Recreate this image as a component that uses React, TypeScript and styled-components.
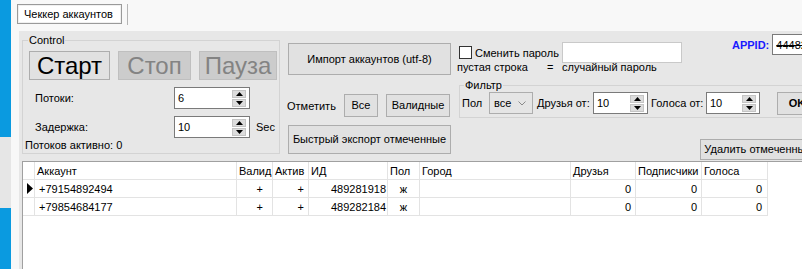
import React from "react";
import styled, { createGlobalStyle } from "styled-components";

const Global = createGlobalStyle`
  html, body { margin: 0; padding: 0; background: #f8f8f8; }
  body {
    font-family: "Liberation Sans", Arial, sans-serif;
    font-size: 11px;
    color: #000;
  }
  #root { width: 802px; height: 269px; overflow: hidden; }
  * { box-sizing: border-box; }
`;

const Screen = styled.div`
  display: flex;
  width: 802px;
  height: 269px;
  overflow: hidden;
`;

const DesktopStrip = styled.div`
  width: 11px;
  flex: none;
  display: flex;
  flex-direction: column;
`;

const StripPart = styled.div<{ $h?: number; $tone: "blue" | "gray" }>`
  flex: ${(p) => (p.$h ? `0 0 ${p.$h}px` : "1 1 auto")};
  background: ${(p) => (p.$tone === "blue" ? "#0a9ae0" : "#e6e6e6")};
`;

const Window = styled.div`
  flex: 1;
  min-width: 0;
  display: flex;
  flex-direction: column;
  background: #f8f8f8;
`;

const TabStrip = styled.div`
  height: 31px;
  flex: none;
  display: flex;
  align-items: flex-start;
  padding: 4px 0 0 6px;
`;

const Tab = styled.div`
  width: 105px;
  height: 20px;
  border: 1px solid #9a9a9a;
  box-shadow: inset 0 0 0 1px #f0f0f0;
  background: #fff;
  display: flex;
  align-items: center;
  padding-left: 6px;
  white-space: nowrap;
`;

const TabDivider = styled.div`
  width: 1px;
  height: 21px;
  margin-left: 5px;
  background: #b4b4b4;
`;

const TabPage = styled.div`
  flex: 1;
  margin-left: 8px;
  background: #e7e7e7;
  padding-left: 3px;
  display: flex;
  flex-direction: column;
  min-height: 0;
`;

const TopArea = styled.div`
  height: 130px;
  flex: none;
  display: flex;
  align-items: flex-start;
`;

const GroupBox = styled.fieldset<{ $w: number; $h: number; $mt?: number }>`
  flex: none;
  width: ${(p) => p.$w}px;
  height: ${(p) => p.$h}px;
  margin: ${(p) => p.$mt ?? 0}px 0 0 0;
  padding: 0;
  border: 1px solid #d3d3d3;
  min-width: 0;
  display: flex;
  flex-direction: column;
`;

const GroupLegend = styled.legend<{ $ml: number }>`
  margin-left: ${(p) => p.$ml}px;
  padding: 0 1px;
  font-size: 11px;
  line-height: 13px;
`;

const Btn = styled.button<{ $w: number; $h: number; $bold?: boolean; $size?: number; $mt?: number; $ml?: number }>`
  flex: none;
  width: ${(p) => p.$w}px;
  height: ${(p) => p.$h}px;
  margin: ${(p) => p.$mt ?? 0}px 0 0 ${(p) => p.$ml ?? 0}px;
  border: 1px solid #adadad;
  background: #e1e1e1;
  color: #000;
  font-family: "Liberation Sans", Arial, sans-serif;
  font-size: ${(p) => p.$size ?? 11}px;
  font-weight: ${(p) => (p.$bold ? 700 : 400)};
  line-height: 1;
  padding: 0;
  display: flex;
  align-items: center;
  justify-content: center;
  white-space: nowrap;
  overflow: hidden;
  &:disabled {
    background: #cccccc;
    border-color: #bfbfbf;
    color: #838383;
  }
`;

const ButtonRow = styled.div`
  display: flex;
  gap: 8px;
  margin: 4px 0 0 6px;
`;

const SettingRow = styled.div<{ $mt: number }>`
  display: flex;
  align-items: center;
  height: 22px;
  margin-top: ${(p) => p.$mt}px;
  padding-left: 12px;
`;

const SettingLabel = styled.span<{ $w: number }>`
  flex: none;
  width: ${(p) => p.$w}px;
  white-space: nowrap;
`;

const Unit = styled.span`
  margin-left: 6px;
`;

const Status = styled.div`
  margin-top: 1px;
  padding-left: 2px;
  line-height: 13px;
  white-space: nowrap;
`;

const NumBox = styled.div<{ $w: number; $h: number }>`
  flex: none;
  width: ${(p) => p.$w}px;
  height: ${(p) => p.$h}px;
  border: 1px solid #7a7a7a;
  background: #fff;
  display: flex;
  align-items: center;
  padding: 0 3px 0 3px;
`;

const NumValue = styled.span`
  flex: 1;
`;

const Spinner = styled.div`
  flex: none;
  width: 14px;
  display: flex;
  flex-direction: column;
  gap: 1px;
`;

const SpinPart = styled.div`
  height: 8px;
  background: #dcdcdc;
  border: 1px solid #c4c4c4;
  display: flex;
  align-items: center;
  justify-content: center;
`;

const MiddleColumn = styled.div`
  flex: none;
  width: 163px;
  margin-left: 8px;
  display: flex;
  flex-direction: column;
`;

const MarkRow = styled.div`
  display: flex;
  align-items: center;
  height: 23px;
  margin-top: 19px;
  gap: 8px;
`;

const MarkLabel = styled.span`
  width: 49px;
  margin-left: -1px;
  white-space: nowrap;
`;

const RightColumn = styled.div`
  flex: 1;
  min-width: 0;
  margin-left: 4px;
  display: flex;
  flex-direction: column;
`;

const FlexLine = styled.div<{ $mt?: number; $pl?: number }>`
  display: flex;
  align-items: flex-start;
  margin-top: ${(p) => p.$mt ?? 0}px;
  padding-left: ${(p) => p.$pl ?? 0}px;
  white-space: nowrap;
`;

const InlineGroup = styled.div<{ $mt?: number; $ml?: number; $h: number }>`
  flex: none;
  display: flex;
  align-items: center;
  height: ${(p) => p.$h}px;
  margin-top: ${(p) => p.$mt ?? 0}px;
  margin-left: ${(p) => p.$ml ?? 0}px;
`;

const CheckBox = styled.span`
  flex: none;
  width: 13px;
  height: 13px;
  border: 1px solid #333;
  background: #fff;
  margin-left: 4px;
`;

const TextLabel = styled.span<{ $w?: number; $ml?: number }>`
  flex: none;
  ${(p) => (p.$w ? `width: ${p.$w}px;` : "")}
  margin-left: ${(p) => p.$ml ?? 0}px;
  white-space: nowrap;
`;

const TextInput = styled.div<{ $w: number; $h: number; $dark?: boolean; $strike?: boolean }>`
  flex: none;
  width: ${(p) => p.$w}px;
  height: ${(p) => p.$h}px;
  border: 1px solid ${(p) => (p.$dark ? "#7a7a7a" : "#c9c9c9")};
  background: #fff;
  padding-left: 3px;
  display: flex;
  align-items: center;
  text-decoration: ${(p) => (p.$strike ? "line-through" : "none")};
  font-size: 11px;
`;

const HintLine = styled.div`
  display: flex;
  height: 12px;
  line-height: 12px;
  margin-top: -2px;
  white-space: nowrap;
`;

const AppIdLabel = styled.span`
  color: #1a1aff;
  font-weight: 700;
  font-size: 11px;
  margin-right: 3px;
`;

const FilterBox = styled(GroupBox)`
  margin: 6px 0 0 4px;
  flex-direction: row;
  align-items: flex-start;
`;

const FilterContent = styled.div`
  display: flex;
  align-items: center;
  height: 22px;
  white-space: nowrap;
`;

const Combo = styled.div`
  flex: none;
  width: 44px;
  height: 22px;
  border: 1px solid #adadad;
  background: #e5e5e5;
  display: flex;
  align-items: center;
  justify-content: space-between;
  padding: 0 6px 0 4px;
`;

const Grid = styled.div`
  flex: 1;
  min-height: 0;
  background: #fff;
  border-left: 1px solid #a0a0a0;
  border-top: 1px solid #a0a0a0;
  overflow: hidden;
`;

const Table = styled.table`
  border-collapse: separate;
  border-spacing: 0;
  table-layout: fixed;
  width: 745px;
`;

const Col = styled.col<{ $w: number }>`
  width: ${(p) => p.$w}px;
`;

const HeadCell = styled.th`
  height: 18px;
  padding: 0 0 0 2px;
  border-right: 1px solid #e3e3e3;
  border-bottom: 1px solid #e3e3e3;
  font-weight: 400;
  text-align: left;
  white-space: nowrap;
  overflow: hidden;
  font-size: 11px;
`;

const Cell = styled.td<{ $align?: "left" | "right" | "center"; $pr?: number; $pl?: number }>`
  height: 18px;
  padding: 0 ${(p) => p.$pr ?? 0}px 0 ${(p) => p.$pl ?? 0}px;
  border-right: 1px solid #e3e3e3;
  border-bottom: 1px solid #e3e3e3;
  text-align: ${(p) => p.$align ?? "left"};
  white-space: nowrap;
  overflow: hidden;
  font-size: 11px;
`;

const RowHeadCell = styled.td`
  height: 18px;
  padding: 0 0 0 4px;
  border-right: 1px solid #e3e3e3;
  border-bottom: 1px solid #e3e3e3;
  vertical-align: middle;
`;

const UpTri = () => (
  <svg width="7" height="4" viewBox="0 0 7 4">
    <polygon points="0,4 7,4 3.5,0" fill="#000" />
  </svg>
);
const DownTri = () => (
  <svg width="7" height="4" viewBox="0 0 7 4">
    <polygon points="0,0 7,0 3.5,4" fill="#000" />
  </svg>
);

const NumericUpDown: React.FC<{ value: string; w: number; h: number }> = ({ value, w, h }) => (
  <NumBox $w={w} $h={h}>
    <NumValue>{value}</NumValue>
    <Spinner>
      <SpinPart>
        <UpTri />
      </SpinPart>
      <SpinPart>
        <DownTri />
      </SpinPart>
    </Spinner>
  </NumBox>
);

const columns = [
  { key: "acc", title: "Аккаунт", w: 202 },
  { key: "valid", title: "Валид", w: 36 },
  { key: "active", title: "Актив", w: 36 },
  { key: "id", title: "ИД", w: 79 },
  { key: "sex", title: "Пол", w: 32 },
  { key: "city", title: "Город", w: 151 },
  { key: "friends", title: "Друзья", w: 65 },
  { key: "subs", title: "Подписчики", w: 66 },
  { key: "votes", title: "Голоса", w: 66 },
];

const rows = [
  { acc: "+79154892494", valid: "+", active: "+", id: "489281918", sex: "ж", city: "", friends: "0", subs: "0", votes: "0" },
  { acc: "+79854684177", valid: "+", active: "+", id: "489282184", sex: "ж", city: "", friends: "0", subs: "0", votes: "0" },
];

const cellProps: Record<string, { $align: "left" | "right" | "center"; $pr?: number; $pl?: number }> = {
  acc: { $align: "left", $pl: 4 },
  valid: { $align: "right", $pr: 9 },
  active: { $align: "right", $pr: 4 },
  id: { $align: "right", $pr: 1 },
  sex: { $align: "center" },
  city: { $align: "left" },
  friends: { $align: "right", $pr: 4 },
  subs: { $align: "right", $pr: 4 },
  votes: { $align: "right", $pr: 5 },
};

export default function App() {
  return (
    <>
      <Global />
      <Screen>
        <DesktopStrip>
          <StripPart $tone="blue" $h={137} />
          <StripPart $tone="gray" $h={71} />
          <StripPart $tone="blue" />
        </DesktopStrip>
        <Window>
          <TabStrip>
            <Tab>Чеккер аккаунтов</Tab>
            <TabDivider />
          </TabStrip>
          <TabPage>
            <TopArea>
              <GroupBox $w={258} $h={120} $mt={3}>
                <GroupLegend $ml={5}>Control</GroupLegend>
                <ButtonRow>
                  <Btn $w={81} $h={29} $size={24}>Старт</Btn>
                  <Btn $w={73} $h={29} $size={24} disabled>Стоп</Btn>
                  <Btn $w={78} $h={29} $size={24} disabled>Пауза</Btn>
                </ButtonRow>
                <SettingRow $mt={7}>
                  <SettingLabel $w={139}>Потоки:</SettingLabel>
                  <NumericUpDown value="6" w={76} h={22} />
                </SettingRow>
                <SettingRow $mt={7}>
                  <SettingLabel $w={139}>Задержка:</SettingLabel>
                  <NumericUpDown value="10" w={76} h={22} />
                  <Unit>Sec</Unit>
                </SettingRow>
                <Status>Потоков активно: 0</Status>
              </GroupBox>

              <MiddleColumn>
                <Btn $w={163} $h={32} $mt={12}>Импорт аккаунтов (utf-8)</Btn>
                <MarkRow>
                  <MarkLabel>Отметить</MarkLabel>
                  <Btn $w={34} $h={23}>Все</Btn>
                  <Btn $w={64} $h={23}>Валидные</Btn>
                </MarkRow>
                <Btn $w={163} $h={29} $mt={8}>Быстрый экспорт отмеченные</Btn>
              </MiddleColumn>

              <RightColumn>
                <FlexLine>
                  <InlineGroup $mt={11} $h={21}>
                    <CheckBox />
                    <TextLabel $w={87} $ml={3}>Сменить пароль</TextLabel>
                    <TextInput $w={120} $h={21} />
                  </InlineGroup>
                  <InlineGroup $mt={3} $ml={50} $h={21}>
                    <AppIdLabel>APPID:</AppIdLabel>
                    <TextInput $w={80} $h={21} $dark $strike>44482</TextInput>
                  </InlineGroup>
                </FlexLine>
                <HintLine>
                  <TextLabel $w={90} $ml={2}>пустая строка</TextLabel>
                  <TextLabel $w={15}>=</TextLabel>
                  <TextLabel>случайный пароль</TextLabel>
                </HintLine>
                <FilterBox $w={420} $h={39}>
                  <GroupLegend $ml={4}>Фильтр</GroupLegend>
                  <FilterContent>
                    <TextLabel $w={27} $ml={2}>Пол</TextLabel>
                    <Combo>
                      <span>все</span>
                      <svg width="8" height="5" viewBox="0 0 8 5">
                        <polyline points="0.5,0.5 4,4 7.5,0.5" fill="none" stroke="#8a8a8a" strokeWidth="1" />
                      </svg>
                    </Combo>
                    <TextLabel $w={56} $ml={4}>Друзья от:</TextLabel>
                    <NumericUpDown value="10" w={55} h={22} />
                    <TextLabel $w={55} $ml={3}>Голоса от:</TextLabel>
                    <NumericUpDown value="10" w={54} h={22} />
                    <Btn $w={40} $h={23} $bold $ml={17}>OK</Btn>
                  </FilterContent>
                </FilterBox>
                <FlexLine $mt={21} $pl={245}>
                  <Btn $w={116} $h={21}>Удалить отмеченные</Btn>
                </FlexLine>
              </RightColumn>
            </TopArea>

            <Grid>
              <Table>
                <colgroup>
                  <Col $w={12} />
                  {columns.map((c) => (
                    <Col key={c.key} $w={c.w} />
                  ))}
                </colgroup>
                <thead>
                  <tr>
                    <HeadCell />
                    {columns.map((c) => (
                      <HeadCell key={c.key}>{c.title}</HeadCell>
                    ))}
                  </tr>
                </thead>
                <tbody>
                  {rows.map((r, i) => (
                    <tr key={r.acc}>
                      <RowHeadCell>
                        {i === 0 && (
                          <svg width="6" height="11" viewBox="0 0 6 11" display="block">
                            <polygon points="0,0 6,5.5 0,11" fill="#000" />
                          </svg>
                        )}
                      </RowHeadCell>
                      {columns.map((c) => (
                        <Cell key={c.key} {...cellProps[c.key]}>
                          {(r as Record<string, string>)[c.key]}
                        </Cell>
                      ))}
                    </tr>
                  ))}
                </tbody>
              </Table>
            </Grid>
          </TabPage>
        </Window>
      </Screen>
    </>
  );
}
